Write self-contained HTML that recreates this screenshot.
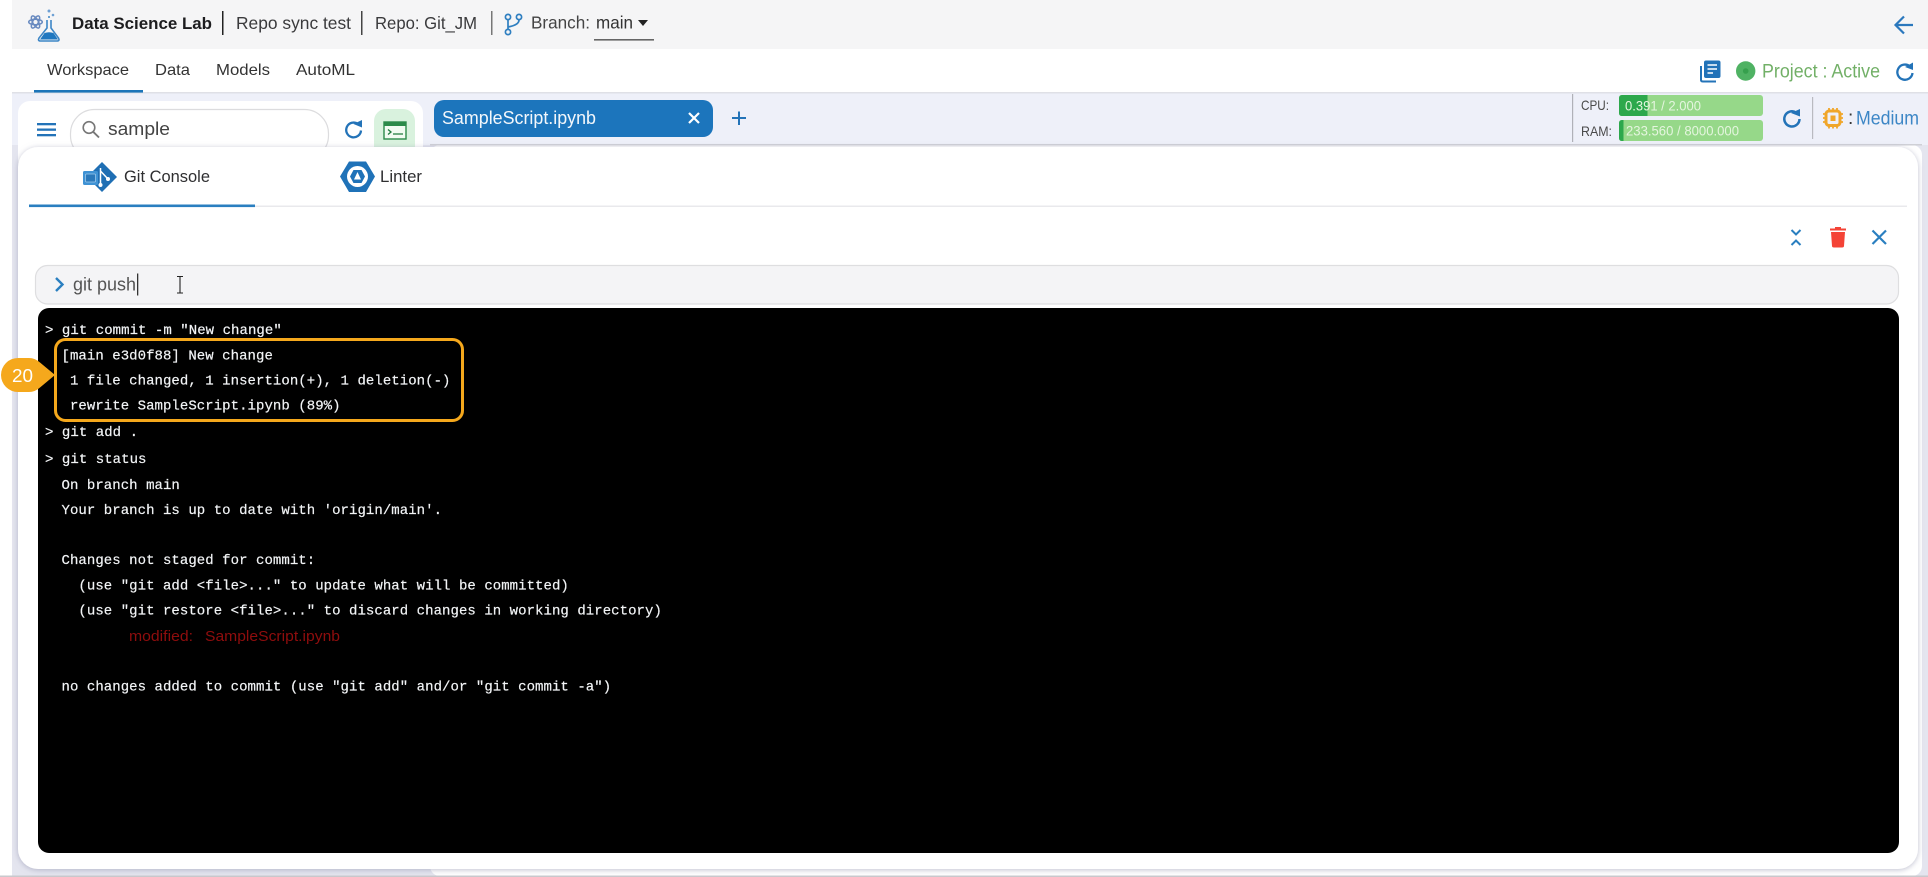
<!DOCTYPE html>
<html><head><meta charset="utf-8"><title>Data Science Lab</title>
<style>
html,body{margin:0;padding:0;background:#fff;width:1928px;height:877px;overflow:hidden}
svg{display:block;position:absolute;left:0;top:0;filter:blur(.3px)}
text{font-family:"Liberation Sans",sans-serif}
.m text{font-family:"Liberation Mono",monospace;font-size:14px;fill:#f2f4f6;white-space:pre;stroke:#f2f4f6;stroke-width:.2px;letter-spacing:.055px}
</style></head><body>
<svg width="1928" height="877" viewBox="0 0 1928 877" xmlns="http://www.w3.org/2000/svg">
<defs>
<filter id="sh" x="-2%" y="-2%" width="104%" height="104%"><feDropShadow dx="0" dy="1" stdDeviation="3" flood-color="#8a8ca8" flood-opacity=".55"/></filter>
</defs>
<!-- backgrounds -->
<rect width="1928" height="877" fill="#fff"/>
<rect x="12" y="0" width="1916" height="49" fill="#f5f5f6"/>
<rect x="12" y="93" width="1916" height="784" fill="#eef0f9"/>
<rect x="12" y="145" width="1916" height="732" fill="#e4e5ef"/>
<rect x="430" y="145" width="1492" height="731" rx="10" fill="#fff"/>
<rect x="12" y="92" width="1916" height="1.5" fill="#dfe0e6"/>
<rect x="430" y="144" width="1492" height="1.5" fill="#cfd0d6"/>
<rect x="0" y="875.5" width="1928" height="1.5" fill="#c9c9cd"/>

<!-- header -->
<g fill="none">
<g stroke="#6a8bc0" stroke-width="1.5"><ellipse cx="35.500" cy="22" rx="6.800" ry="2.800" transform="rotate(60 35.500 22)"/><ellipse cx="35.500" cy="22" rx="6.800" ry="2.800" transform="rotate(-60 35.500 22)"/><ellipse cx="35.500" cy="22" rx="6.800" ry="2.800"/></g>
<path d="M47 20 V28 L39 38 Q37.500 41 40.500 41 H57 Q60 41 58.500 38 L51 28 V20" stroke="#3d86c6" stroke-width="1.600"/>
<path d="M40 39.500 L44.500 33 Q49 31.500 53.500 33 L58 39.500Z" fill="#1f77c0"/>
<circle cx="49" cy="11" r="1.500" fill="#6ea0d4"/><circle cx="53" cy="15" r="1.300" fill="#6ea0d4"/><circle cx="49" cy="17" r="1" fill="#3d86c6"/>
</g>
<g font-size="17.500" fill="#2b2b2b">
<text x="72" y="29" font-weight="700" font-size="16.500" textLength="140" lengthAdjust="spacingAndGlyphs" fill="#1d1d1f">Data Science Lab</text>
<text x="236" y="29" textLength="115" lengthAdjust="spacingAndGlyphs" fill="#3a3a3c">Repo sync test</text>
<text x="375" y="29" textLength="102" lengthAdjust="spacingAndGlyphs" fill="#3a3a3c">Repo: Git_JM</text>
<text x="531" y="28.500" textLength="59" lengthAdjust="spacingAndGlyphs" fill="#444">Branch:</text>
<text x="596" y="28.500" textLength="37" lengthAdjust="spacingAndGlyphs" fill="#333">main</text>
</g>
<rect x="222" y="11" width="1.500" height="24" fill="#222"/><rect x="361" y="11" width="1.500" height="24" fill="#444"/><rect x="491" y="11" width="1.500" height="24" fill="#777"/>
<g fill="none" stroke="#2f7fc0" stroke-width="1.700"><circle cx="508" cy="17" r="2.600"/><circle cx="519" cy="17" r="2.600"/><circle cx="508" cy="32" r="2.600"/><path d="M508 20 V29 M519 20 Q519 25 508 27"/></g>
<path d="M638 20 H648 L643 26Z" fill="#222"/>
<rect x="594" y="39" width="60" height="1.600" fill="#666"/>
<path d="M1913 25 H1896 M1904 16.500 L1895.500 25 L1904 33.500" fill="none" stroke="#2b78bd" stroke-width="2.200"/>

<!-- nav -->
<g font-size="16" fill="#333">
<text x="47" y="75" textLength="82" lengthAdjust="spacingAndGlyphs">Workspace</text>
<text x="155" y="75" textLength="35" lengthAdjust="spacingAndGlyphs">Data</text>
<text x="216" y="75" textLength="54" lengthAdjust="spacingAndGlyphs">Models</text>
<text x="296" y="75" textLength="59" lengthAdjust="spacingAndGlyphs">AutoML</text>
</g>
<rect x="34" y="90" width="109" height="2.600" fill="#1c75b9"/>
<!-- nav right -->
<g fill="none" stroke="#2373b8" stroke-width="2"><path d="M1701 66 V80 Q1701 81.500 1703 81.500 H1716"/></g>
<rect x="1704" y="60.500" width="16.500" height="17.500" rx="2" fill="#2373b8"/>
<g stroke="#fff" stroke-width="1.600"><path d="M1707.500 65 H1717 M1707.500 69 H1717 M1707.500 73 H1713"/></g>
<circle cx="1745.700" cy="71" r="9.700" fill="#4fb263"/><circle cx="1745.700" cy="71" r="2.800" fill="#36a04d"/>
<text x="1762" y="77.500" font-size="19" fill="#72b067" textLength="118" lengthAdjust="spacingAndGlyphs">Project : Active</text>
<g fill="none" stroke="#2373b8" stroke-width="2.300"><path d="M1910 66.500 A7.600 7.600 0 1 0 1912.500 73"/></g><path d="M1905 67 L1913 62.500 V70Z" fill="#2373b8"/>

<!-- resource row -->
<rect x="1572" y="94" width="1.200" height="48" fill="#b0b1b8"/>
<g font-size="14" fill="#4a4a4a"><text x="1581" y="110" textLength="28" lengthAdjust="spacingAndGlyphs">CPU:</text><text x="1581" y="136" textLength="31" lengthAdjust="spacingAndGlyphs">RAM:</text></g>
<rect x="1619" y="95" width="144" height="21" rx="3" fill="#96d889"/>
<path d="M1622 95 H1647.500 V116 H1622 Q1619 116 1619 113 V98 Q1619 95 1622 95Z" fill="#2da84c"/>
<rect x="1619" y="120" width="144" height="21" rx="3" fill="#96d889"/>
<path d="M1622 120 H1623.500 V141 H1622 Q1619 141 1619 138 V123 Q1619 120 1622 120Z" fill="#2da84c"/>
<g font-size="14" fill="#e4f5de"><text x="1625" y="110.500" textLength="76" lengthAdjust="spacingAndGlyphs">0.391 / 2.000</text><text x="1626" y="135.500" textLength="113" lengthAdjust="spacingAndGlyphs">233.560 / 8000.000</text></g>
<g fill="none" stroke="#2373b8" stroke-width="2.500"><path d="M1796 112.500 A7.600 7.600 0 1 0 1799.500 119"/></g><path d="M1791 113 L1800 109 V116.500Z" fill="#2373b8"/>
<rect x="1812" y="97" width="1.200" height="42" fill="#b9bac0"/>
<g><rect x="1826" y="111" width="14" height="14.500" rx="3" fill="none" stroke="#f0a62a" stroke-width="3"/><rect x="1830.500" y="115.500" width="5" height="5.500" fill="#f0a62a"/>
<path d="M1829 108 V111 M1833 108 V111 M1837 108 V111 M1829 125 V128.500 M1833 125 V128.500 M1837 125 V128.500 M1823 114 H1827 M1823 118 H1827 M1823 122 H1827 M1839 114 H1843 M1839 118 H1843 M1839 122 H1843" stroke="#f0a62a" stroke-width="1.800"/></g>
<text x="1848" y="124" font-size="19" fill="#333">:</text>
<text x="1856" y="124.500" font-size="19" fill="#3c86c6" textLength="63" lengthAdjust="spacingAndGlyphs">Medium</text>

<!-- left panel -->
<rect x="18" y="101" width="405" height="70" rx="12" fill="#fff"/>
<g fill="#2373b8"><rect x="37" y="123" width="19" height="2.300"/><rect x="37" y="128.500" width="19" height="2.300"/><rect x="37" y="134" width="19" height="2.300"/></g>
<rect x="70.500" y="109.500" width="258" height="50" rx="24" fill="#fff" stroke="#dcdcde" stroke-width="1.200"/>
<circle cx="89" cy="127.500" r="5.800" fill="none" stroke="#777" stroke-width="1.600"/><path d="M93.200 131.800 L99 137.500" stroke="#777" stroke-width="1.900"/>
<text x="108" y="135" font-size="18" fill="#444" textLength="62" lengthAdjust="spacingAndGlyphs">sample</text>
<g fill="none" stroke="#2373b8" stroke-width="2.300"><path d="M358 124 A7.400 7.400 0 1 0 361 130.500"/></g><path d="M353.500 124 L362 120 V127.500Z" fill="#2373b8"/>
<rect x="374" y="109" width="41" height="60" rx="12" fill="#d9f2de"/>
<rect x="384" y="122" width="22" height="17" fill="#f2fbf2" stroke="#2c8a4a" stroke-width="1.400"/><rect x="384" y="122" width="22" height="4" fill="#2c8a4a"/>
<path d="M388 129.500 L391 132 L388 134.500 M393 134 H403" fill="none" stroke="#1f7a3d" stroke-width="1.300"/>

<!-- file tab -->
<rect x="434" y="100" width="279" height="37" rx="10" fill="#1c75bc"/>
<text x="442" y="124" font-size="18.500" fill="#f3f7fb" textLength="154" lengthAdjust="spacingAndGlyphs">SampleScript.ipynb</text>
<path d="M689 113 L699 123 M699 113 L689 123" stroke="#fff" stroke-width="2.200"/>
<path d="M739 111.500 V125 M732 118 H746" stroke="#2373b8" stroke-width="2"/>

<!-- console card -->
<rect x="18" y="147" width="1900" height="722" rx="20" fill="#fff" filter="url(#sh)"/>
<rect x="29" y="205.500" width="1878" height="1.500" fill="#e9e9ec"/>
<rect x="29" y="204.500" width="226" height="2.600" fill="#2a7fc0"/>
<!-- git icon -->
<path d="M102 162 L117 177 L102 192 L87 177Z" fill="#1f6fb4"/>
<rect x="83" y="171" width="15" height="14" rx="1.500" fill="#3f92d4"/>
<rect x="85.500" y="174" width="10" height="8" rx="1" fill="#2a78ba" stroke="#9cc7ea" stroke-width=".8"/>
<path d="M100.500 168 V185 M100.500 171 L108 179" stroke="#fff" stroke-width="1.500" fill="none"/><circle cx="100.500" cy="185" r="2" fill="#fff"/><circle cx="108" cy="179" r="2" fill="#fff"/>
<text x="124" y="182" font-size="16.500" fill="#2f2f31" textLength="86" lengthAdjust="spacingAndGlyphs">Git Console</text>
<!-- linter icon -->
<path d="M349 161.500 H366 L375 176.500 L366 192 H349 L340 176.500Z" fill="#1f72b8"/>
<circle cx="357.500" cy="176.500" r="10.500" fill="#fff"/><path d="M353.500 170 H361.500 L365 176.500 L361.500 183 H353.500 L350 176.500Z" fill="#1f72b8"/>
<path d="M357.500 172 L361 179.500 H354Z" fill="#fff"/>
<text x="380" y="182" font-size="16.500" fill="#2f2f31" textLength="42" lengthAdjust="spacingAndGlyphs">Linter</text>

<!-- actions -->
<path d="M1791.500 230 L1796 234.500 L1800.500 230 M1791.500 245 L1796 240.500 L1800.500 245" fill="none" stroke="#2a7fc0" stroke-width="2"/>
<path d="M1831 232 H1845 L1844 246 Q1844 247.500 1842 247.500 H1834 Q1832 247.500 1832 246Z" fill="#f44336"/>
<path d="M1830 229.500 H1846 M1835 228 H1841" stroke="#f44336" stroke-width="2"/>
<path d="M1872.500 230.500 L1886 244 M1886 230.500 L1872.500 244" stroke="#2a7fc0" stroke-width="2.200"/>

<!-- input -->
<rect x="35.500" y="265.500" width="1863" height="38.500" rx="12" fill="#f4f4f6" stroke="#dedee0" stroke-width="1.200"/>
<path d="M56 278 L62.500 284.500 L56 291" fill="none" stroke="#2a7fc0" stroke-width="2.400"/>
<text x="73" y="290.500" font-size="18" fill="#555" textLength="63" lengthAdjust="spacingAndGlyphs">git push</text>
<rect x="137" y="273.500" width="1.300" height="22" fill="#333"/>
<path d="M177 276.500 H183 M177 293 H183 M180 277 V293" stroke="#222" stroke-width="1.100" fill="none"/>

<!-- terminal -->
<rect x="38" y="308" width="1861" height="545" rx="11" fill="#000"/>
<g class="m">
<text x="45" y="334" xml:space="preserve">&gt; git commit -m "New change"</text>
<text x="61.500" y="359.500" xml:space="preserve">[main e3d0f88] New change</text>
<text x="61.500" y="384.500" xml:space="preserve"> 1 file changed, 1 insertion(+), 1 deletion(-)</text>
<text x="61.500" y="409.500" xml:space="preserve"> rewrite SampleScript.ipynb (89%)</text>
<text x="45" y="436" xml:space="preserve">&gt; git add .</text>
<text x="45" y="463" xml:space="preserve">&gt; git status</text>
<text x="61.500" y="489" xml:space="preserve">On branch main</text>
<text x="61.500" y="514" xml:space="preserve">Your branch is up to date with 'origin/main'.</text>
<text x="61.500" y="564" xml:space="preserve">Changes not staged for commit:</text>
<text x="61.500" y="589.500" xml:space="preserve">  (use "git add &lt;file&gt;..." to update what will be committed)</text>
<text x="61.500" y="614.500" xml:space="preserve">  (use "git restore &lt;file&gt;..." to discard changes in working directory)</text>
<text x="61.500" y="690.500" xml:space="preserve">no changes added to commit (use "git add" and/or "git commit -a")</text>
</g>
<g font-size="14.500" fill="#8f0d0d"><text x="129" y="641" textLength="64" lengthAdjust="spacingAndGlyphs">modified:</text><text x="205" y="641" textLength="135" lengthAdjust="spacingAndGlyphs">SampleScript.ipynb</text></g>

<!-- callout -->
<rect x="55.500" y="339.500" width="407" height="81" rx="10" fill="none" stroke="#f5a81c" stroke-width="3"/>
<path d="M18 358 H29 Q35 358 40 362.500 L55 375 L40 387.500 Q35 392 29 392 H18 A17 17 0 0 1 18 358Z" fill="#f5a81c"/>
<text x="12" y="382" font-size="18.500" fill="#fff" textLength="21" lengthAdjust="spacingAndGlyphs">20</text>
</svg>
</body></html>
